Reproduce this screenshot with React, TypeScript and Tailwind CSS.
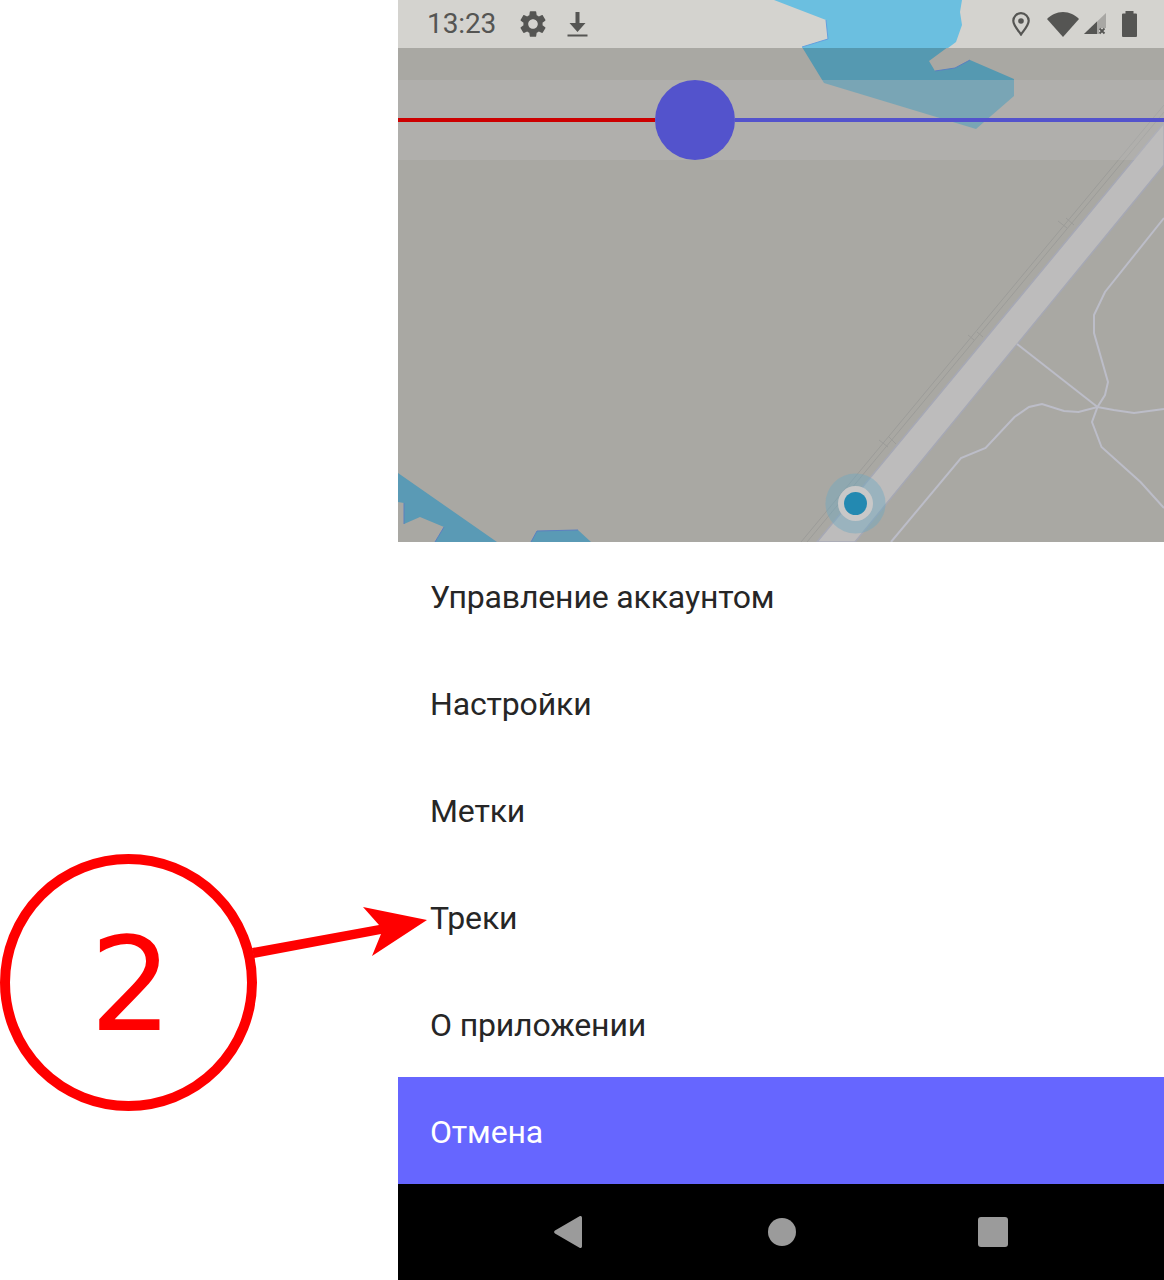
export default function App() {
  const rows = ["Управление аккаунтом", "Настройки", "Метки", "Треки", "О приложении"];
  return (
    <div className="relative flex h-[1280px] w-[1164px] justify-end overflow-hidden bg-white font-['Roboto',sans-serif]">
      <div className="flex w-[766px] flex-col">
        {/* map */}
        <div className="relative h-[542px] shrink-0 bg-[#a9a8a3]">
          <svg className="absolute inset-0" width="766" height="542" viewBox="398 0 766 542">
            <polygon points="802,47 824,83 976,129 1014,96 1014,79 970,60 955,68 935,71 929,61 948,47" fill="#5599b1" />
            <polyline points="970,60 955,68 935,71" fill="none" stroke="#5a80c0" strokeWidth="1" />
            <polygon points="398,473 497,542 435,542 444,527 420,517 404,524 404,503 398,502" fill="#5a9ab5" />
            <polyline points="444,527 435,542" fill="none" stroke="#5a80c0" strokeWidth="1" />
            <polyline points="404,503 404,524" fill="none" stroke="#5a80c0" strokeWidth="1" />
            <polygon points="531,542 537,531 578,530 591,542" fill="#5a9ab5" />
            <polyline points="531,542 537,531 578,530" fill="none" stroke="#5a80c0" strokeWidth="1" />
            <polygon points="817,542 1164,123 1164,165 855,542" fill="#bdbcbc" stroke="#a6a8b4" strokeWidth="1.500" />
            <g fill="none" stroke="#9c9c99" strokeWidth="1">
              <line x1="801" y1="542" x2="1164" y2="105" />
              <line x1="807" y1="542" x2="1164" y2="112" />
              <path d="M1058,221 L1067,228 M1066,218 L1074,225" />
              <path d="M968,335 L974,340 M977,332 L983,337" />
              <path d="M879,440 L888,447 M888,436 L896,444" />
            </g>
            <g fill="none" stroke="#bcbdc8" strokeWidth="2">
              <polyline points="1017,344 1097.500,407" />
              <polyline points="1164,218 1105,292 1094,315 1094,333 1108,382 1105,395 1097.500,407 1092,422 1101.500,447 1140.500,482 1164,508" />
              <polyline points="891,542 961,458 985.600,448 1014.500,417 1029,407 1042,404 1064,411 1078.500,412 1097.500,407 1113.700,410 1134,413 1164,409" />
            </g>
            <circle cx="855.500" cy="503.500" r="30" fill="#6fa8c2" fillOpacity="0.45" />
            <circle cx="855.500" cy="503.500" r="17.500" fill="#c8c8c8" />
            <circle cx="855.500" cy="503.500" r="11.500" fill="#2389b1" />
          </svg>

          {/* status bar */}
          <div className="relative flex h-12 items-center bg-[#d4d3cf] pl-[29px] pr-[27px] text-[#555553]">
            <svg className="absolute inset-0" width="766" height="48" viewBox="398 0 766 48">
              <polygon points="774,0 826,20 828,39 802,47 802.500,48 948,48 956,42 962,25 960,12 962,0" fill="#6bbfe0" />
              <polyline points="826,20 828,39 802,47" fill="none" stroke="#63a0e0" strokeWidth="1" />
            </svg>
            <span className="relative text-[28px] leading-none tracking-[-0.1px]">13:23</span>
            <svg className="relative ml-[21px]" width="32" height="32" viewBox="0 0 24 24" fill="currentColor">
              <path d="M19.14 12.94c.04-.3.06-.61.06-.94 0-.32-.02-.64-.07-.94l2.03-1.58c.18-.14.23-.41.12-.61l-1.92-3.32c-.12-.22-.37-.29-.59-.22l-2.39.96c-.5-.38-1.03-.7-1.62-.94l-.36-2.54c-.04-.24-.24-.41-.48-.41h-3.84c-.24 0-.43.17-.47.41l-.36 2.54c-.59.24-1.13.57-1.62.94l-2.39-.96c-.22-.08-.47 0-.59.22L2.74 8.87c-.12.21-.08.47.12.61l2.03 1.58c-.05.3-.09.63-.09.94s.02.64.07.94l-2.03 1.58c-.18.14-.23.41-.12.61l1.92 3.32c.12.22.37.29.59.22l2.39-.96c.5.38 1.03.7 1.62.94l.36 2.54c.05.24.24.41.48.41h3.84c.24 0 .44-.17.47-.41l.36-2.54c.59-.24 1.13-.56 1.62-.94l2.39.96c.22.08.47 0 .59-.22l1.92-3.32c.12-.22.07-.47-.12-.61l-2.01-1.58zM12 15.6c-1.98 0-3.6-1.62-3.6-3.6s1.62-3.6 3.6-3.6 3.6 1.62 3.6 3.6-1.62 3.6-3.6 3.6z" />
            </svg>
            <svg className="relative ml-[18px]" width="21" height="27" viewBox="0 0 21 27" fill="currentColor">
              <path d="M8.500 1h4v11h6l-8 9-8-9h6z" />
              <rect x="0.500" y="23.500" width="20" height="2" />
            </svg>
            <div className="relative ml-auto flex items-center">
              <svg width="18" height="24" viewBox="0 0 18 24" fill="none" stroke="currentColor" strokeWidth="2.200">
                <path d="M9 22.500C5 17 1.300 13 1.300 8.800a7.700 7.600 0 0 1 15.400 0C16.700 13 13 17 9 22.500z" />
                <circle cx="9" cy="9" r="2.800" fill="currentColor" stroke="none" />
              </svg>
              <svg className="ml-[17px]" width="32" height="25" viewBox="0 0 32 25" fill="currentColor">
                <path d="M16 25L0 7C4 3 9.500 0 16 0s12 3 16 7z" />
              </svg>
              <svg className="ml-[5px]" width="22" height="22" viewBox="0 0 22 22">
                <polygon points="0,21 22,0 22,15 15,15 15,21" fill="#a8a7a4" />
                <polygon points="0,21 13,8.500 13,21" fill="currentColor" />
                <path d="M15.500 15.500l5 5m0-5l-5 5" stroke="currentColor" strokeWidth="1.800" />
              </svg>
              <svg className="ml-[16px]" width="15" height="26" viewBox="0 0 15 26" fill="currentColor">
                <path d="M3.500 0h8v2.500H14a1 1 0 0 1 1 1V25a1 1 0 0 1-1 1H1a1 1 0 0 1-1-1V3.500a1 1 0 0 1 1-1h2.500z" />
              </svg>
            </div>
          </div>

          {/* track slider */}
          <div className="relative mt-8 flex h-20 items-center bg-[#bcbcbe]/35">
            <div className="h-1 w-[257px] bg-[#cc0000]" />
            <div className="h-20 w-20 rounded-full bg-[#5353cc]" />
            <div className="h-1 flex-1 bg-[#5353cc]" />
          </div>
        </div>

        {/* menu */}
        {rows.map((r) => (
          <div key={r} className="flex h-[107px] items-center pl-[32px] pt-[3px] text-[32px] tracking-[-0.15px] text-[#262626]">
            {r}
          </div>
        ))}
        <div className="flex h-[107px] items-center bg-[#6666ff] pl-[32px] pt-[3px] text-[32px] tracking-[-0.15px] text-white">Отмена</div>

        {/* nav bar */}
        <div className="flex h-24 items-center bg-black pl-[156px]">
          <svg className="mt-[-1px]" width="28" height="32" viewBox="0 0 28 32" fill="#9b9b9b">
            <path d="M25.500 0.300c1.200-.7 2.500 0 2.500 1.500v28.400c0 1.500-1.300 2.200-2.500 1.500L1 17.500c-1.200-.8-1.200-2.200 0-3z" />
          </svg>
          <div className="ml-[186px] h-7 w-7 rounded-full bg-[#9b9b9b]" />
          <div className="ml-[182px] h-[30px] w-[30px] rounded-[3px] bg-[#9b9b9b]" />
        </div>
      </div>

      {/* annotation */}
      <div className="absolute left-0 top-[854px] flex h-[257px] w-[257px] items-center justify-center rounded-full border-[10px] border-[#ff0000] pl-[5px] pt-[5px] font-['DejaVu_Sans',sans-serif] text-[130px] leading-none text-[#ff0000]">
        2
      </div>
      <svg className="absolute left-[240px] top-[900px]" width="200" height="64" viewBox="240 900 200 64" fill="#ff0000">
        <polygon points="252,948 379,925 363,907 427,920 372,956 381,934 254,958" />
      </svg>
    </div>
  );
}
